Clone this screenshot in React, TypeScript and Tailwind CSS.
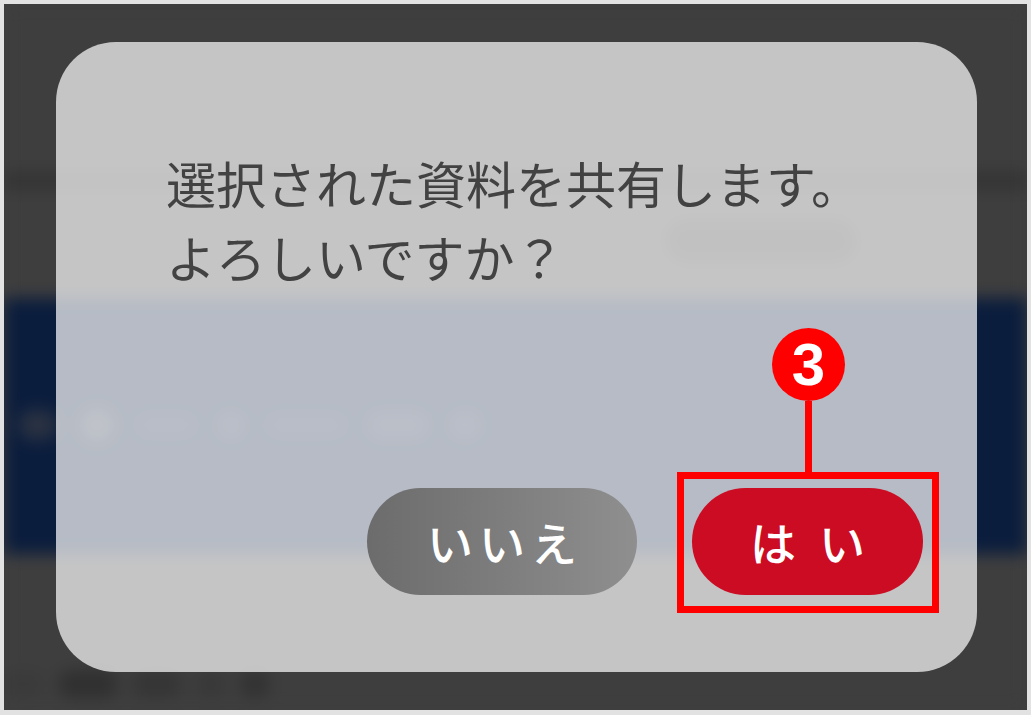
const jp = { fontFamily: '"Noto Sans CJK JP", "Noto Sans", sans-serif' };

function BackdropPage() {
  // the app behind the dialog, blurred
  return (
    <div className="flex h-full flex-col blur-[8px]">
      <div className="h-[168px] bg-[#3e3e3e]" />
      <div className="h-[18px] bg-[#343434]" />
      <div className="relative h-[108px] bg-[#3e3e3e]">
        <div className="absolute left-[662px] top-[30px] h-[42px] w-[190px] rounded-full bg-[#303030]" />
      </div>
      <div className="flex h-[256px] flex-col bg-[#0b1d3d] px-[14px] pt-[110px]">
        <div className="flex items-center gap-[22px]">
          <div className="h-[30px] w-[40px] rounded-full bg-[#2a3242]" />
          <div className="h-[34px] w-[34px] rounded-full bg-[#2c364a]" />
          <div className="h-[20px] w-[60px] rounded-full bg-[#16244a]" />
          <div className="h-[26px] w-[26px] rounded-full bg-[#1c2a4a]" />
          <div className="h-[20px] w-[80px] rounded-full bg-[#16244a]" />
          <div className="h-[26px] w-[60px] rounded-full bg-[#1c2a4a]" />
          <div className="h-[26px] w-[30px] rounded-full bg-[#1c2a4a]" />
        </div>
      </div>
      <div className="flex flex-1 flex-col justify-end bg-[#3e3e3e] pb-[12px] pl-0">
        <div className="flex items-center gap-[14px]">
          <div className="h-[24px] w-[40px] rounded-full bg-[#3a3a3a]" />
          <div className="h-[28px] w-[60px] rounded-full bg-[#303030]" />
          <div className="h-[26px] w-[50px] rounded-full bg-[#353535]" />
          <div className="h-[26px] w-[30px] rounded-full bg-[#383838]" />
          <div className="h-[28px] w-[30px] rounded-full bg-[#323232]" />
        </div>
      </div>
    </div>
  );
}

function Dialog() {
  return (
    <div className="flex h-full flex-col rounded-[60px] bg-white/70 pl-[110px] pr-[54px] pt-[103px] pb-[77px]" style={jp}>
      <p className="text-[50px] leading-[74px] text-[#424242]">
        選択された資料を共有します。
        <br />
        よろしいですか？
      </p>
      <div className="mt-auto flex justify-end gap-[55px]">
        <button className="flex h-[107px] w-[270px] items-center justify-center rounded-full bg-gradient-to-r from-[#6c6c6c] to-[#8f8f8f] pl-[6px] text-[46px] font-medium tracking-[6px] text-white">
          いいえ
        </button>
        <div className="relative">
          <button className="flex h-[107px] w-[231px] items-center justify-center rounded-full bg-[#cb0c22] pl-[23px] text-[46px] font-medium tracking-[23px] text-white">
            はい
          </button>
          {/* annotation */}
          <div className="pointer-events-none absolute left-[-15px] top-[-16px] h-[141px] w-[262px] border-[7px] border-[#ff0000]" />
          <div className="pointer-events-none absolute left-[113px] top-[-87px] h-[72px] w-[7px] bg-[#ff0000]" />
          <div
            className="pointer-events-none absolute left-[80px] top-[-160px] flex h-[73px] w-[73px] items-center justify-center rounded-full bg-[#ff0000] text-[60px] font-bold leading-none text-white"
            style={{ fontFamily: '"Liberation Sans", Arial, sans-serif' }}
          >
            3
          </div>
        </div>
      </div>
    </div>
  );
}

export default function App() {
  return (
    <div className="h-[715px] w-[1031px] bg-[#e2e2e2] pl-[4px] pt-[4px] pr-[4px] pb-[5px]">
      <div className="relative h-full w-full overflow-hidden bg-[#3e3e3e]">
        <BackdropPage />
        <div className="absolute inset-0 pl-[52px] pr-[50px] pt-[38px] pb-[38px]">
          <Dialog />
        </div>
      </div>
    </div>
  );
}
